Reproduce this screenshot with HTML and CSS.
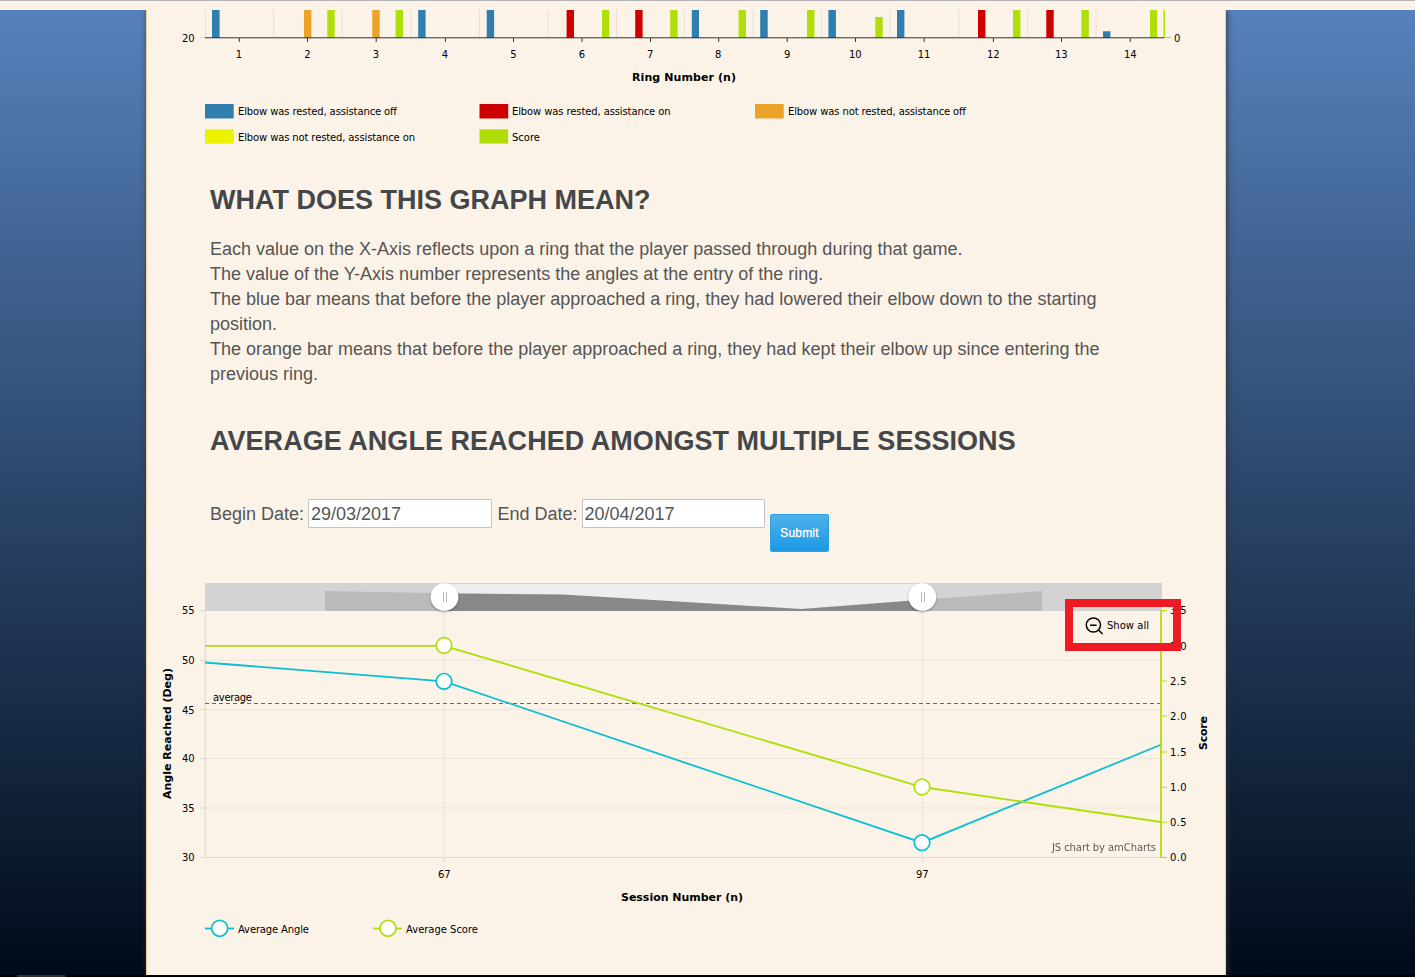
FILE: index.html
```html
<!DOCTYPE html>
<html lang="en">
<head>
<meta charset="utf-8">
<title>Session statistics</title>
<link rel="stylesheet" href="styles.css">
</head>
<body>
<div class="topbar"></div>
<div class="page">
<main class="panel">
<svg class="chart" width="1078" height="140" viewBox="147 10 1078 140">
  <path class="grid-solid" d="M205.5 10V38M273.5 10V38M342 10V38M411 10V38M479.5 10V38M548 10V38M616.5 10V38M684.5 10V38M753 10V38M821.5 10V38M890 10V38M959 10V38M1027.5 10V38M1096 10V38"/>
  <path class="blue" d="M212 10h7.6v28h-7.6zM418.2 10h7.4v28h-7.4zM486.7 10h7.4v28h-7.4zM691.8 10h7.2v28h-7.2zM760.2 10h7.5v28h-7.5zM828.4 10h7.5v28h-7.5zM897 10h7.4v28h-7.4zM1103 31.2h7.4v6.8h-7.4z"/>
  <path class="orange" d="M304 10h7.4v28h-7.4zM372.3 10h7.4v28h-7.4z"/>
  <path class="red" d="M566.6 10h7.4v28h-7.4zM635.2 10h7.4v28h-7.4zM978 10h7.4v28h-7.4zM1046.3 10h7.4v28h-7.4z"/>
  <path class="green" d="M327.3 10h7.4v28h-7.4zM395.6 10h7.4v28h-7.4zM602 10h7.2v28h-7.2zM670.2 10h7.4v28h-7.4zM738.6 10h7.4v28h-7.4zM807 10h7.4v28h-7.4zM875.3 17h7.4v21h-7.4zM1013 10h7.4v28h-7.4zM1081.4 10h7.4v28h-7.4zM1150 10h7.2v28h-7.2zM1163.5 10h1.5v28h-1.5z"/>
  <path class="axis-light" d="M200 37.5h5"/>
  <path class="axis-dark" d="M205 37.8H1164M239.3 38v4M307.5 38v4M376.2 38v4M445.4 38v4M513.5 38v4M582 38v4M650.5 38v4M718.7 38v4M787.2 38v4M855.5 38v4M924.2 38v4M993.4 38v4M1061.5 38v4M1130.2 38v4"/>
  <path class="green-line thin" d="M1164 37.5h7"/>
  <g class="label">
    <text x="182" y="42" textLength="12.5">20</text><text x="1174" y="42">0</text>
    <g class="middle">
      <text x="239" y="58">1</text><text x="307.5" y="58">2</text><text x="376" y="58">3</text><text x="445" y="58">4</text><text x="513.5" y="58">5</text><text x="582" y="58">6</text><text x="650.3" y="58">7</text><text x="718.3" y="58">8</text><text x="787.2" y="58">9</text><text x="855.3" y="58">10</text><text x="924" y="58">11</text><text x="993.3" y="58">12</text><text x="1061.3" y="58">13</text><text x="1130.3" y="58">14</text>
    </g>
    <text class="title" x="632" y="81" textLength="104">Ring Number (n)</text>
    <text x="238" y="115" textLength="159">Elbow was rested, assistance off</text>
    <text x="512" y="115" textLength="158.5">Elbow was rested, assistance on</text>
    <text x="788" y="115" textLength="178">Elbow was not rested, assistance off</text>
    <text x="238" y="141" textLength="177">Elbow was not rested, assistance on</text>
    <text x="512" y="141" textLength="28">Score</text>
  </g>
  <path class="blue" d="M205 104h28.7v14.5h-28.7z"/>
  <path class="red" d="M479.5 104h28.7v14.5h-28.7z"/>
  <path class="orange" d="M755 104h28.7v14.5h-28.7z"/>
  <path class="yellow" d="M205 129.3h28.7v14.3h-28.7z"/>
  <path class="green" d="M479.5 129.3h28.7v14.3h-28.7z"/>
</svg>

<section class="copy">
  <h2>WHAT DOES THIS GRAPH MEAN?</h2>
  <p>Each value on the X-Axis reflects upon a ring that the player passed through during that game.<br>
  The value of the Y-Axis number represents the angles at the entry of the ring.<br>
  The blue bar means that before the player approached a ring, they had lowered their elbow down to the starting position.<br>
  The orange bar means that before the player approached a ring, they had kept their elbow up since entering the previous ring.</p>
  <h2 class="second">AVERAGE ANGLE REACHED AMONGST MULTIPLE SESSIONS</h2>
  <form class="dates">
    <label for="begin">Begin Date:</label><input id="begin" type="text" value="29/03/2017">
    <label class="end" for="end">End Date:</label><input id="end" type="text" value="20/04/2017">
    <button type="button">Submit</button>
  </form>
</section>

<svg class="chart" width="1078" height="403" viewBox="147 572 1078 403">
  <defs>
    <filter id="knob-shadow" x="-30%" y="-30%" width="160%" height="160%"><feDropShadow dx="0" dy="1" stdDeviation="1" flood-opacity=".4"/></filter>
  </defs>
  <rect x="205" y="583" width="957" height="28" fill="#d3d3d3"/>
  <rect x="444" y="584" width="478" height="27" fill="#eee"/>
  <path fill="#bababa" d="M325 591L444 593.2V611H325zM922 599.8L1042 591V611H922z"/>
  <path fill="#888" d="M444 593.2L563 594.5L801 609L922 599.8V611H444z"/>
  <path class="axis-light" d="M205.3 611V857M200 857.5H1162M444.5 857v5M922.5 857v5M200 610.5h5M200 660.3h5M200 709.5h5M200 758.5h5M200 808h5"/>
  <path class="grid-dotted" d="M444.5 611V857M922.5 611V857M205 660.3H1160M205 709.5H1160M205 758.5H1160M205 808H1160"/>
  <path class="average" d="M205 703.5H1160"/>
  <path class="cyan-line" d="M205 662.5L444 681.3L922 842.7L1161.5 744.5"/>
  <path class="green-line" d="M205 645.8H444L922 787L1161 822"/>
  <path class="green-line" d="M1161 611V857.5"/>
  <path class="green-line thin" d="M1161 610.5h6M1161 645.8h6M1161 681h6M1161 716h6M1161 752h6M1161 787.3h6M1161 822.3h6M1161 857.5h6"/>
  <g class="marker cyan-line"><circle cx="444" cy="681.3" r="7.8"/><circle cx="922" cy="842.7" r="7.8"/></g>
  <g class="marker green-line"><circle cx="444" cy="645.5" r="7.8"/><circle cx="922" cy="787" r="7.8"/></g>
  <g filter="url(#knob-shadow)"><circle cx="444.5" cy="597" r="13.8" fill="#fff"/><circle cx="922.3" cy="597" r="13.8" fill="#fff"/></g>
  <path class="grip" d="M443.5 592v10M446.5 592v10M921.5 592v10M924.5 592v10"/>
  <g class="label">
    <text x="182" y="614" textLength="12.5">55</text><text x="182" y="664" textLength="12.5">50</text><text x="182" y="714" textLength="12.5">45</text><text x="182" y="762" textLength="12.5">40</text><text x="182" y="812" textLength="12.5">35</text><text x="182" y="861" textLength="12.5">30</text>
    <text x="1170" y="614" textLength="16.5">3.5</text><text x="1170" y="650" textLength="16.5">3.0</text><text x="1170" y="685" textLength="16.5">2.5</text><text x="1170" y="720" textLength="16.5">2.0</text><text x="1170" y="756" textLength="16.5">1.5</text><text x="1170" y="791" textLength="16.5">1.0</text><text x="1170" y="826" textLength="16.5">0.5</text><text x="1170" y="861" textLength="16.5">0.0</text>
    <text x="438" y="878" textLength="12.5">67</text><text x="916" y="878" textLength="12.5">97</text>
    <text x="213" y="701" textLength="39">average</text>
    <text class="title" x="621" y="901" textLength="122">Session Number (n)</text>
    <text class="title" transform="translate(171 799) rotate(-90)" textLength="131">Angle Reached (Deg)</text>
    <text class="title" transform="translate(1207 750) rotate(-90)" textLength="34">Score</text>
    <text x="238" y="933" textLength="71">Average Angle</text><text x="406" y="933" textLength="72">Average Score</text>
    <text class="credit" x="1052" y="851" textLength="104">JS chart by amCharts</text>
    <text x="1107" y="629" textLength="42">Show all</text>
  </g>
  <path class="magnifier" d="M1090 625.2h6.6M1098.4 630l4.2 4"/>
  <circle class="magnifier" cx="1093.4" cy="625" r="7.1"/>
  <path class="cyan-line" d="M205 928.5h29"/><path class="green-line" d="M373 928.5h29"/>
  <g class="marker"><circle class="cyan-line" cx="219.7" cy="928.3" r="8"/><circle class="green-line" cx="388" cy="928.3" r="8"/></g>
  <rect class="highlight" x="1069" y="603" width="108" height="44"/>
</svg>
</main>
</div>
<footer class="bottombar"><span></span></footer>
</body>
</html>
```
FILE: styles.css
```css
* { box-sizing: border-box; }
body {
  margin: 0;
  height: 977px;
  overflow: hidden;
  display: flex;
  flex-direction: column;
  font-family: "Liberation Sans", Arial, sans-serif;
  color: #555;
  background: #000;
}
.topbar { flex: none; height: 10px; background: #fcf3e8; border-top: 1px solid #b5b3b3; }
.page {
  flex: none;
  height: 965px;
  padding-left: 146px;
  overflow: hidden;
  background: linear-gradient(#5781bc, #000b19);
}
.panel {
  width: 1080px;
  height: 965px;
  display: flex;
  flex-direction: column;
  background: #fcf3e8;
  border-left: 1px solid #f5cf9a;
  border-right: 1px solid #e6cda8;
  box-shadow: 1px 0 6px rgba(50, 50, 50, .9);
}
.chart { display: block; flex: none; }
.copy { flex: none; height: 422px; padding: 34px 0 0 63px; }
h2 { margin: 0; font-size: 27px; line-height: 32px; font-weight: bold; color: #444749; white-space: nowrap; }
p { width: 950px; margin: 21px 0 0; font-size: 18px; line-height: 25px; }
h2.second { margin-top: 38px; letter-spacing: .035px; }
.dates { display: flex; align-items: flex-start; margin-top: 42px; font-size: 18px; line-height: 29px; }
.dates label { width: 98px; white-space: nowrap; padding-top: 1px; }
.dates label.end { width: 84px; margin-left: 6px; }
input {
  width: 183.5px;
  height: 29px;
  padding: 2px 2px 1px;
  font: 18px "Liberation Sans", Arial, sans-serif;
  color: #555;
  background: #fff;
  border: 1px solid #c3c3c3;
  border-radius: 1px;
}
button {
  width: 59px;
  height: 38px;
  margin: 15px 0 0 5px;
  padding: 0 0 1px;
  border: 1px solid #2d9fe4;
  border-radius: 2px;
  background: linear-gradient(#4fb2eb, #1c98e3);
  color: #fff;
  font: 12px "Liberation Sans", Arial, sans-serif;
  letter-spacing: .2px;
  -webkit-text-stroke: .25px #fff;
}
.label { font: 10px "DejaVu Sans", Verdana, sans-serif; fill: #000; }
.label .title { font-size: 11px; font-weight: bold; }
.middle { text-anchor: middle; }
.credit { fill: #000; opacity: .65; }
.blue { fill: #307eae; }
.orange { fill: #eaa228; }
.red { fill: #c00; }
.green { fill: #b0de09; }
.yellow { fill: #eaf200; }
.grid-solid { stroke: #e5dfd6; }
.grid-dotted { stroke: #ddd5cc; stroke-dasharray: 1 1; }
.axis-light { stroke: #d8d8d8; }
.axis-dark { stroke: #333; }
.average { fill: none; stroke: #d63a3a; stroke-width: 1; stroke-dasharray: 4 3; }
.cyan-line { fill: none; stroke: #0bbfd3; stroke-width: 1.8; }
.green-line { fill: none; stroke: #b0de09; stroke-width: 1.8; }
.green-line.thin { stroke-width: 1; }
.marker circle { fill: #fff; stroke-width: 1.7; }
.grip { stroke: #b5b5b5; }
.magnifier { fill: none; stroke: #000; stroke-width: 1.5; }
.highlight { fill: none; stroke: #ed1c24; stroke-width: 8; }
.bottombar { height: 2px; padding-left: 17px; background: #000; }
.bottombar span { display: block; width: 48px; height: 2px; background: #2d3137; }
```
